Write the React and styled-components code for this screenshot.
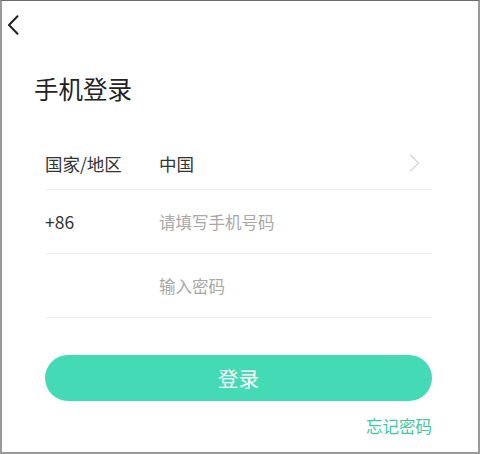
import styled, { createGlobalStyle } from "styled-components";

const GlobalStyle = createGlobalStyle`
  html, body {
    margin: 0;
    padding: 0;
    background: #fff;
  }
  body {
    font-family: "Noto Sans CJK SC", "Noto Sans", sans-serif;
  }
  * {
    box-sizing: border-box;
  }
`;

const Frame = styled.div`
  width: 480px;
  height: 454px;
  background: #fff;
  border-style: solid;
  border-color: #9a9a9a;
  border-top-color: #6a6a6a;
  border-width: 1px 2px 2px 2px;
  display: flex;
  flex-direction: column;
`;

const Header = styled.div`
  height: 48px;
  display: flex;
  align-items: center;
  padding-left: 5px;
`;

const BackButton = styled.button`
  border: none;
  background: none;
  padding: 0;
  display: flex;
  cursor: pointer;
`;

const Title = styled.h1`
  margin: 24px 0 0 32px;
  font-size: 24.5px;
  line-height: 32px;
  font-weight: 400;
  color: #222;
`;

const Form = styled.form`
  margin: 32px 46px 0 43px;
  display: flex;
  flex-direction: column;
`;

const Row = styled.div`
  height: ${(p) => (p.$first ? "53px" : "64px")};
  display: flex;
  align-items: center;
  border-bottom: 1px solid #efefef;
`;

const Label = styled.span`
  width: 114px;
  flex-shrink: 0;
  font-size: 17.5px;
  color: #333;
`;

const Value = styled.span`
  flex: 1;
  font-size: 17.5px;
  color: #333;
`;

const Field = styled.input`
  flex: 1;
  border: none;
  outline: none;
  padding: 0;
  font-family: inherit;
  font-size: 16.5px;
  color: #333;
  background: transparent;

  &::placeholder {
    color: #a8a8a8;
  }
`;

const Arrow = styled.svg`
  margin-right: 12px;
`;

const SubmitButton = styled.button`
  margin-top: 37px;
  height: 46px;
  border: none;
  border-radius: 23px;
  background: #44dab5;
  color: #fff;
  font-family: inherit;
  font-size: 20.5px;
  cursor: pointer;
`;

const Forgot = styled.a`
  align-self: flex-end;
  margin-top: 13px;
  font-size: 16.5px;
  line-height: 24px;
  color: #3fc8a2;
  text-decoration: none;
  cursor: pointer;
`;

export default function App() {
  return (
    <>
      <GlobalStyle />
      <Frame>
        <Header>
          <BackButton type="button" aria-label="返回">
            <svg width="12" height="20" viewBox="0 0 12 20" fill="none">
              <path d="M10.5 1.2 L2 10 L10.5 18.8" stroke="#222" strokeWidth="2" strokeLinecap="round" strokeLinejoin="round" />
            </svg>
          </BackButton>
        </Header>
        <Title>手机登录</Title>
        <Form onSubmit={(e) => e.preventDefault()}>
          <Row $first>
            <Label>国家/地区</Label>
            <Value>中国</Value>
            <Arrow width="11" height="18" viewBox="0 0 11 18" fill="none">
              <path d="M1.5 1 L9.5 9 L1.5 17" stroke="#d9d9d9" strokeWidth="1.5" strokeLinecap="round" strokeLinejoin="round" />
            </Arrow>
          </Row>
          <Row>
            <Label>+86</Label>
            <Field type="tel" placeholder="请填写手机号码" />
          </Row>
          <Row>
            <Label />
            <Field type="password" placeholder="输入密码" />
          </Row>
          <SubmitButton type="submit">登录</SubmitButton>
          <Forgot>忘记密码</Forgot>
        </Form>
      </Frame>
    </>
  );
}
